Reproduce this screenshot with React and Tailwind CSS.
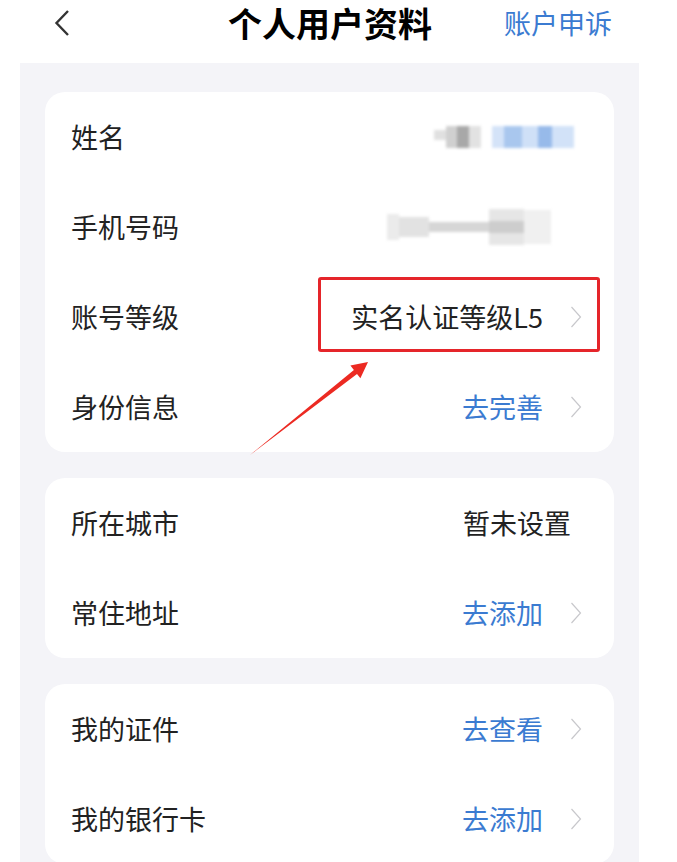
import React from 'react';

const Chevron = () => (
  <svg width="12" height="22" viewBox="0 0 12 22" className="shrink-0">
    <polyline points="1.5,1 10.5,11 1.5,21" fill="none" stroke="#c8c8cc" strokeWidth="1.2" />
  </svg>
);

const Row = ({ label, children, arrow = true }) => (
  <div className={`h-[90px] flex items-center justify-between pl-[26px] ${arrow ? 'pr-[32px]' : 'pr-[43px]'}`}>
    <span className="text-[27px] text-[#222]">{label}</span>
    <div className="flex items-center gap-[27px]">
      {children}
      {arrow && <Chevron />}
    </div>
  </div>
);

const Blue = ({ children }) => <span className="text-[27px] text-[#3b7bd1]">{children}</span>;

export default function App() {
  return (
    <div className="relative w-[677px] h-[862px] bg-white overflow-hidden font-['Noto_Sans_CJK_SC',sans-serif]">
      {/* 顶部导航 */}
      <div className="h-[63px] flex items-center pl-[54px] pb-[18px]">
        <svg width="16" height="28" viewBox="0 0 16 28" className="shrink-0">
          <polyline points="14,2 2.5,14 14,26" fill="none" stroke="#333" strokeWidth="2.4" />
        </svg>
        <div className="ml-[158px] text-[34px] font-bold text-black leading-[40px] whitespace-nowrap">个人用户资料</div>
        <span className="ml-[72px] text-[27px] text-[#3b7bd1] leading-[36px] whitespace-nowrap">账户申诉</span>
      </div>

      <div className="ml-[20px] w-[619px] bg-[#f4f4f8] px-[25px] pt-[29px] flex flex-col gap-[26px] h-[799px]">
        <div className="relative bg-white rounded-[20px]">
          <Row label="姓名" arrow={false}>
            <div className="flex items-center gap-[11px] -mr-[3px] blur-[1.5px]">
              <div className="flex h-[22px]">
                <div className="w-[12px] h-[10px] mt-[4px] bg-[#e0e0e0]" />
                <div className="w-[11px] bg-[#d0d0d0]" />
                <div className="w-[12px] bg-[#a8a8a8]" />
                <div className="w-[12px] bg-[#e2e2e2]" />
              </div>
              <div className="flex h-[22px]">
                <div className="w-[12px] bg-[#d4e3f8]" />
                <div className="w-[18px] bg-[#a9c7ee]" />
                <div className="w-[16px] bg-[#cfe0f7]" />
                <div className="w-[14px] bg-[#97baea]" />
                <div className="w-[22px] bg-[#d2e2f8]" />
              </div>
            </div>
          </Row>
          <Row label="手机号码" arrow={false}>
            <div className="flex items-center h-[36px] blur-[1.5px] mr-[20px]">
              <div className="w-[12px] h-[26px] bg-[#ebebeb]" />
              <div className="w-[30px] h-[20px] bg-[#e2e2e2]" />
              <div className="w-[60px] h-[10px] bg-[#d6d6d6]" />
              <div className="w-[35px] h-[36px] bg-[#e6e6e6] flex items-center"><div className="w-full h-[12px] bg-[#cdcdcd]" /></div>
              <div className="w-[27px] h-[34px] bg-[#f0f0f0]" />
            </div>
          </Row>
          <Row label="账号等级">
            <span className="text-[27px] text-[#222]">实名认证等级L5</span>
          </Row>
          <Row label="身份信息">
            <Blue>去完善</Blue>
          </Row>
          {/* 红框标注 */}
          <div className="absolute left-[273px] top-[185px] w-[282px] h-[75px] border-[3px] border-[#e5252a] rounded-[3px]" />
        </div>

        <div className="bg-white rounded-[20px]">
          <Row label="所在城市" arrow={false}>
            <span className="text-[27px] text-[#222]">暂未设置</span>
          </Row>
          <Row label="常住地址">
            <Blue>去添加</Blue>
          </Row>
        </div>

        <div className="bg-white rounded-[20px]">
          <Row label="我的证件">
            <Blue>去查看</Blue>
          </Row>
          <Row label="我的银行卡">
            <Blue>去添加</Blue>
          </Row>
        </div>
      </div>

      {/* 红色箭头 */}
      <svg className="absolute left-0 top-0 pointer-events-none" width="677" height="862" viewBox="0 0 677 862">
        <polygon
          points="250,455 357,373.9 360.4,378.2 368,362 350.4,365.6 353.9,369.9"
          fill="#ec2a22"
        />
      </svg>
    </div>
  );
}
